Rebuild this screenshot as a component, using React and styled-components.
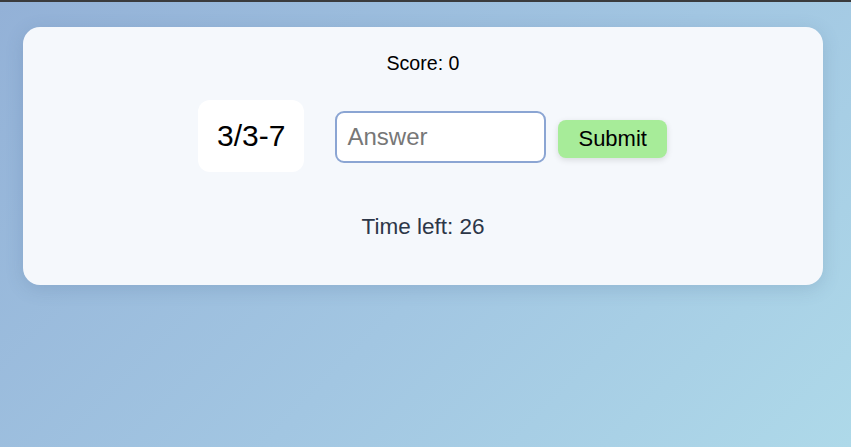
import styled, { createGlobalStyle } from "styled-components";
import { useState } from "react";

const GlobalStyle = createGlobalStyle`
  * {
    box-sizing: border-box;
  }

  html,
  body {
    margin: 0;
    height: 100%;
  }

  body {
    font-family: "Liberation Sans", Arial, sans-serif;
    border-top: 2px solid #3a3b3d;
    background: linear-gradient(135deg, #93b1d7 0%, #a2c6e2 55%, #aed9e9 100%);
    overflow: hidden;
  }
`;

const App = () => {
  const [answer, setAnswer] = useState("");
  const score = 0;
  const timeLeft = 26;

  return (
    <>
      <GlobalStyle />
      <Page>
        <Card>
          <Score>Score: {score}</Score>
          <QuestionRow>
            <Problem>3/3-7</Problem>
            <AnswerInput
              placeholder="Answer"
              value={answer}
              onChange={(e) => setAnswer(e.target.value)}
            />
            <SubmitButton>Submit</SubmitButton>
          </QuestionRow>
          <Timer>Time left: {timeLeft}</Timer>
        </Card>
      </Page>
    </>
  );
};

const Page = styled.div`
  padding: 25px 0 0 23px;
`;

const Card = styled.div`
  width: 800px;
  background: #f5f8fc;
  border-radius: 17px;
  box-shadow: 0 4px 18px rgba(60, 90, 130, 0.18);
  padding: 25px 0 44px;
  display: flex;
  flex-direction: column;
  align-items: center;
`;

const Score = styled.div`
  font-size: 19.6px;
  line-height: 22px;
  color: #000;
`;

const QuestionRow = styled.div`
  display: flex;
  align-items: center;
  margin-top: 26px;
  margin-left: 19px;
`;

const Problem = styled.div`
  background: #fff;
  border-radius: 12px;
  padding: 18px 19px;
  font-size: 30px;
  line-height: 36px;
  color: #000;
  margin-right: 31px;
`;

const AnswerInput = styled.input`
  width: 211px;
  height: 52px;
  padding: 10px;
  border: 2px solid #8ba5d3;
  border-radius: 9px;
  font-family: "Liberation Sans", Arial, sans-serif;
  font-size: 24px;
  color: #222;
  background: #fff;
  outline: none;
  margin-top: 2px;

  &::placeholder {
    color: #777;
  }
`;

const SubmitButton = styled.button`
  margin-left: 12px;
  margin-top: 6px;
  height: 38px;
  padding: 0 20px;
  border: none;
  border-radius: 8px;
  background: #a7ec99;
  color: #000;
  font-family: "Liberation Sans", Arial, sans-serif;
  font-size: 22px;
  box-shadow: 0 2px 6px rgba(0, 0, 0, 0.12);
  cursor: pointer;
`;

const Timer = styled.div`
  margin-top: 41px;
  font-size: 22.5px;
  line-height: 28px;
  color: #2d3748;
`;

export default App;
